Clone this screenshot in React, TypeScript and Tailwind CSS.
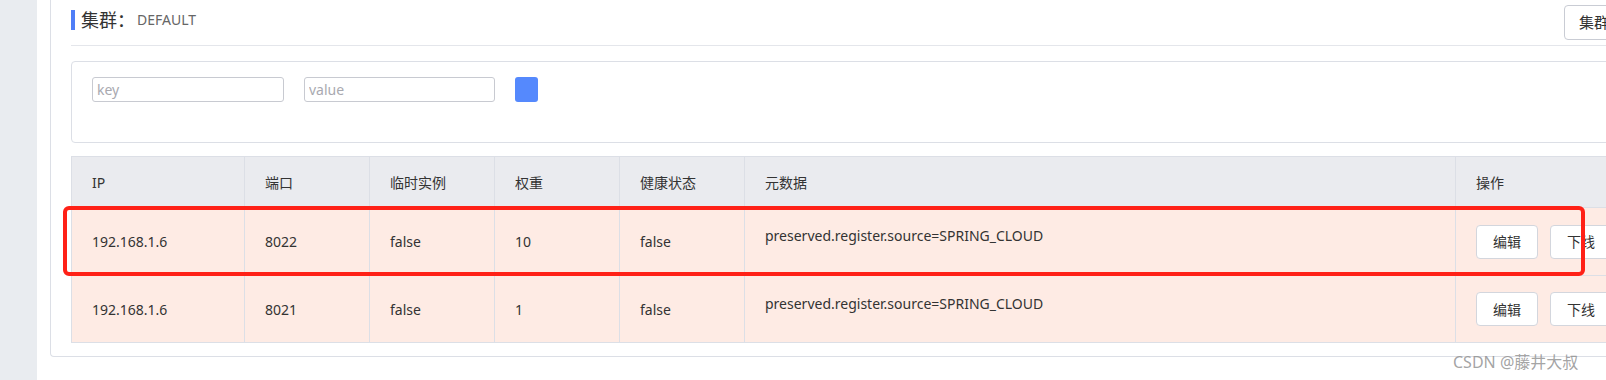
import React from 'react';

const rows = [
  { ip: '192.168.1.6', port: '8022', ephemeral: 'false', weight: '10', healthy: 'false', meta: 'preserved.register.source=SPRING_CLOUD', h: 'h-[68px]' },
  { ip: '192.168.1.6', port: '8021', ephemeral: 'false', weight: '1', healthy: 'false', meta: 'preserved.register.source=SPRING_CLOUD', h: 'h-[67px]' },
];

const headers = ['IP', '端口', '临时实例', '权重', '健康状态', '元数据', '操作'];

export default function App() {
  return (
    <div className="relative flex h-[380px] w-[1606px] overflow-hidden bg-white font-['Noto_Sans','Noto_Sans_CJK_SC',sans-serif] text-[14px] text-[#333]">
      {/* sidebar strip */}
      <div className="w-[37px] shrink-0 bg-[#e9ecf0]" />

      {/* card */}
      <div className="ml-[13px] h-[357px] w-[1624px] shrink-0 rounded-bl-[4px] border-b border-l border-[#dcdfe6] px-[20px]">
        {/* header */}
        <div className="flex h-[46px] items-start justify-between border-b border-[#e4e6eb]">
          <div className="flex items-center pt-[10px]">
            <span className="h-[20px] w-[4px] bg-[#4f7ef7]" />
            <span className="ml-[6px] text-[18px] leading-[20px] text-[#333]">集群：</span>
            <span className="ml-[2px] text-[14px] leading-[20px] text-[#666]">DEFAULT</span>
          </div>
          <button className="mt-[5px] h-[35px] w-[90px] rounded-[4px] border border-[#c9ccd4] bg-white px-[14px] text-[15px] leading-none text-[#333] whitespace-nowrap">
            集群配置
          </button>
        </div>

        {/* filter box */}
        <div className="mt-[15px] h-[82px] rounded-[4px] border border-[#dcdfe6] px-[20px] pt-[15px]">
          <div className="flex items-center gap-[20px]">
            <input
              placeholder="key"
              className="h-[25px] w-[192px] rounded-[3px] border border-[#c8cad1] px-[4px] text-[14px] text-[#333] outline-none placeholder:text-[#a9a9b0]"
            />
            <input
              placeholder="value"
              className="h-[25px] w-[191px] rounded-[3px] border border-[#c8cad1] px-[4px] text-[14px] text-[#333] outline-none placeholder:text-[#a9a9b0]"
            />
            <button className="h-[25px] w-[23px] rounded-[3px] bg-[#5589fd]" />
          </div>
        </div>

        {/* table */}
        <table className="mt-[13px] w-[1560px] table-fixed border-collapse">
          <colgroup>
            <col className="w-[173px]" />
            <col className="w-[125px]" />
            <col className="w-[125px]" />
            <col className="w-[125px]" />
            <col className="w-[125px]" />
            <col className="w-[711px]" />
            <col className="w-[176px]" />
          </colgroup>
          <thead>
            <tr className="h-[51px] bg-[#eaebef]">
              {headers.map((h) => (
                <th key={h} className="border border-[#dcdfe6] px-[20px] text-left text-[14px] font-normal text-[#333]">
                  {h}
                </th>
              ))}
            </tr>
          </thead>
          <tbody>
            {rows.map((r, i) => (
              <tr key={i} className={`${r.h} bg-[#feebe4]`}>
                <td className="border border-[#dcdfe6] px-[20px]">{r.ip}</td>
                <td className="border border-[#dcdfe6] px-[20px]">{r.port}</td>
                <td className="border border-[#dcdfe6] px-[20px]">{r.ephemeral}</td>
                <td className="border border-[#dcdfe6] px-[20px]">{r.weight}</td>
                <td className="border border-[#dcdfe6] px-[20px]">{r.healthy}</td>
                <td className="border border-[#dcdfe6] px-[20px] pt-[17px] align-top">{r.meta}</td>
                <td className="border border-[#dcdfe6] px-[20px]">
                  <div className="flex gap-[12px]">
                    <button className="h-[34px] w-[62px] shrink-0 rounded-[4px] border border-[#d3d6dd] bg-white text-[14px] text-[#333]">编辑</button>
                    <button className="h-[34px] w-[62px] shrink-0 rounded-[4px] border border-[#d3d6dd] bg-white text-[14px] text-[#333]">下线</button>
                  </div>
                </td>
              </tr>
            ))}
          </tbody>
        </table>
      </div>

      {/* red annotation box */}
      <div className="pointer-events-none absolute left-[63px] top-[206px] h-[70px] w-[1522px] rounded-[6px] border-[4px] border-[#ff2117]" />

      {/* watermark */}
      <div className="pointer-events-none absolute left-[1453px] top-[350px] text-[16px] leading-[24px] text-[#8c8c8c]/80 whitespace-nowrap">
        CSDN @藤井大叔
      </div>
    </div>
  );
}
